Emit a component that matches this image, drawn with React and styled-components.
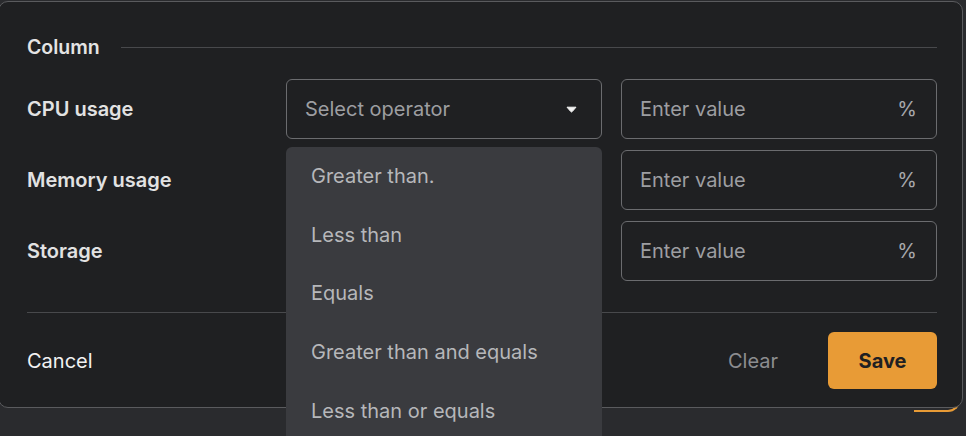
import React from "react";
import styled, { createGlobalStyle } from "styled-components";

const GlobalStyle = createGlobalStyle`
  html, body {
    margin: 0;
    padding: 0;
    background: #2a2b2e;
    overflow: hidden;
  }
  body {
    font-family: Inter, "Noto Sans", sans-serif;
  }
`;

const Page = styled.div`
  position: relative;
  width: 966px;
  height: 436px;
  padding-top: 1px;
  box-sizing: border-box;
`;

// edge of an orange button that peeks out from under the card
const BehindButton = styled.div`
  position: absolute;
  right: 6px;
  top: 380px;
  width: 44px;
  height: 30px;
  border: 2px solid #e89b36;
  border-top: none;
  border-left: none;
  border-radius: 0 0 12px 0;
`;

const Card = styled.div`
  position: relative;
  margin-left: -2px;
  width: 965px;
  height: 407px;
  box-sizing: border-box;
  background: #1f2022;
  border: 1px solid #5a5b5e;
  border-radius: 10px;
  padding: 33px 25px 0 28px;
  display: flex;
  flex-direction: column;
`;

const Header = styled.div`
  display: flex;
  align-items: center;
  gap: 21px;
  height: 24px;
`;

const HeaderTitle = styled.span`
  font-size: 19.5px;
  font-weight: 600;
  color: #e4e4e4;
`;

const HeaderLine = styled.div`
  flex: 1;
  height: 1px;
  background: #48494c;
`;

const Rows = styled.div`
  margin-top: 20px;
  display: flex;
  flex-direction: column;
  gap: 11px;
`;

const Row = styled.div`
  display: grid;
  grid-template-columns: 240px 1fr 1fr;
  column-gap: 19px;
  align-items: center;
  height: 60px;
`;

const Label = styled.span`
  font-size: 20px;
  font-weight: 600;
  color: #e2e2e2;
`;

const SelectWrap = styled.div`
  position: relative;
  height: 100%;
`;

const Field = styled.div`
  height: 100%;
  box-sizing: border-box;
  border: 1px solid #6b6c6f;
  border-radius: 6px;
  display: flex;
  align-items: center;
  justify-content: space-between;
  padding: 0 19px 0 18px;
  font-size: 20px;
  color: #9d9ea1;
`;

const Suffix = styled.span`
  color: #a8a9ac;
`;

const Caret = styled.svg`
  width: 11px;
  height: 7px;
  margin-right: 5px;
`;

const Menu = styled.ul`
  position: absolute;
  z-index: 5;
  left: 0;
  right: 0;
  top: 68px;
  margin: 0;
  padding: 0;
  list-style: none;
  background: #3a3b3f;
  border-radius: 6px;
  height: 300px;
  overflow: hidden;
`;

const MenuItem = styled.li`
  height: 58.6px;
  display: flex;
  align-items: center;
  padding-left: 25px;
  font-size: 20px;
  color: #b6b7ba;
`;

const Divider = styled.div`
  margin-top: 31px;
  height: 1px;
  background: #48494c;
`;

const Footer = styled.div`
  margin-top: 19px;
  display: flex;
  align-items: center;
`;

const TextButton = styled.button`
  background: none;
  border: none;
  padding: 0;
  font-family: inherit;
  font-size: 20px;
  color: ${(p) => (p.$muted ? "#8c8d90" : "#f2f2f2")};
  margin-left: ${(p) => (p.$push ? "auto" : "0")};
  margin-right: ${(p) => (p.$push ? "50px" : "0")};
`;

const SaveButton = styled.button`
  width: 109px;
  height: 57px;
  border: none;
  border-radius: 6px;
  background: #e89b36;
  color: #1f2022;
  font-family: inherit;
  font-size: 20px;
  font-weight: 700;
`;

const rows = ["CPU usage", "Memory usage", "Storage"];
const operators = [
  "Greater than.",
  "Less than",
  "Equals",
  "Greater than and equals",
  "Less than or equals",
];

export default function App() {
  return (
    <>
      <GlobalStyle />
      <Page>
        <BehindButton />
        <Card>
          <Header>
            <HeaderTitle>Column</HeaderTitle>
            <HeaderLine />
          </Header>
          <Rows>
            {rows.map((name, i) => (
              <Row key={name}>
                <Label>{name}</Label>
                <SelectWrap>
                  {i === 0 && (
                    <>
                      <Field>
                        <span>Select operator</span>
                        <Caret viewBox="0 0 11 7">
                          <path
                            d="M1 1.2 H10 L6.2 5.6 Q5.5 6.4 4.8 5.6 Z"
                            fill="#f2f2f2"
                            stroke="#f2f2f2"
                            strokeWidth="1"
                            strokeLinejoin="round"
                          />
                        </Caret>
                      </Field>
                      <Menu>
                        {operators.map((op) => (
                          <MenuItem key={op}>{op}</MenuItem>
                        ))}
                      </Menu>
                    </>
                  )}
                </SelectWrap>
                <Field>
                  <span>Enter value</span>
                  <Suffix>%</Suffix>
                </Field>
              </Row>
            ))}
          </Rows>
          <Divider />
          <Footer>
            <TextButton>Cancel</TextButton>
            <TextButton $muted $push>
              Clear
            </TextButton>
            <SaveButton>Save</SaveButton>
          </Footer>
        </Card>
      </Page>
    </>
  );
}
